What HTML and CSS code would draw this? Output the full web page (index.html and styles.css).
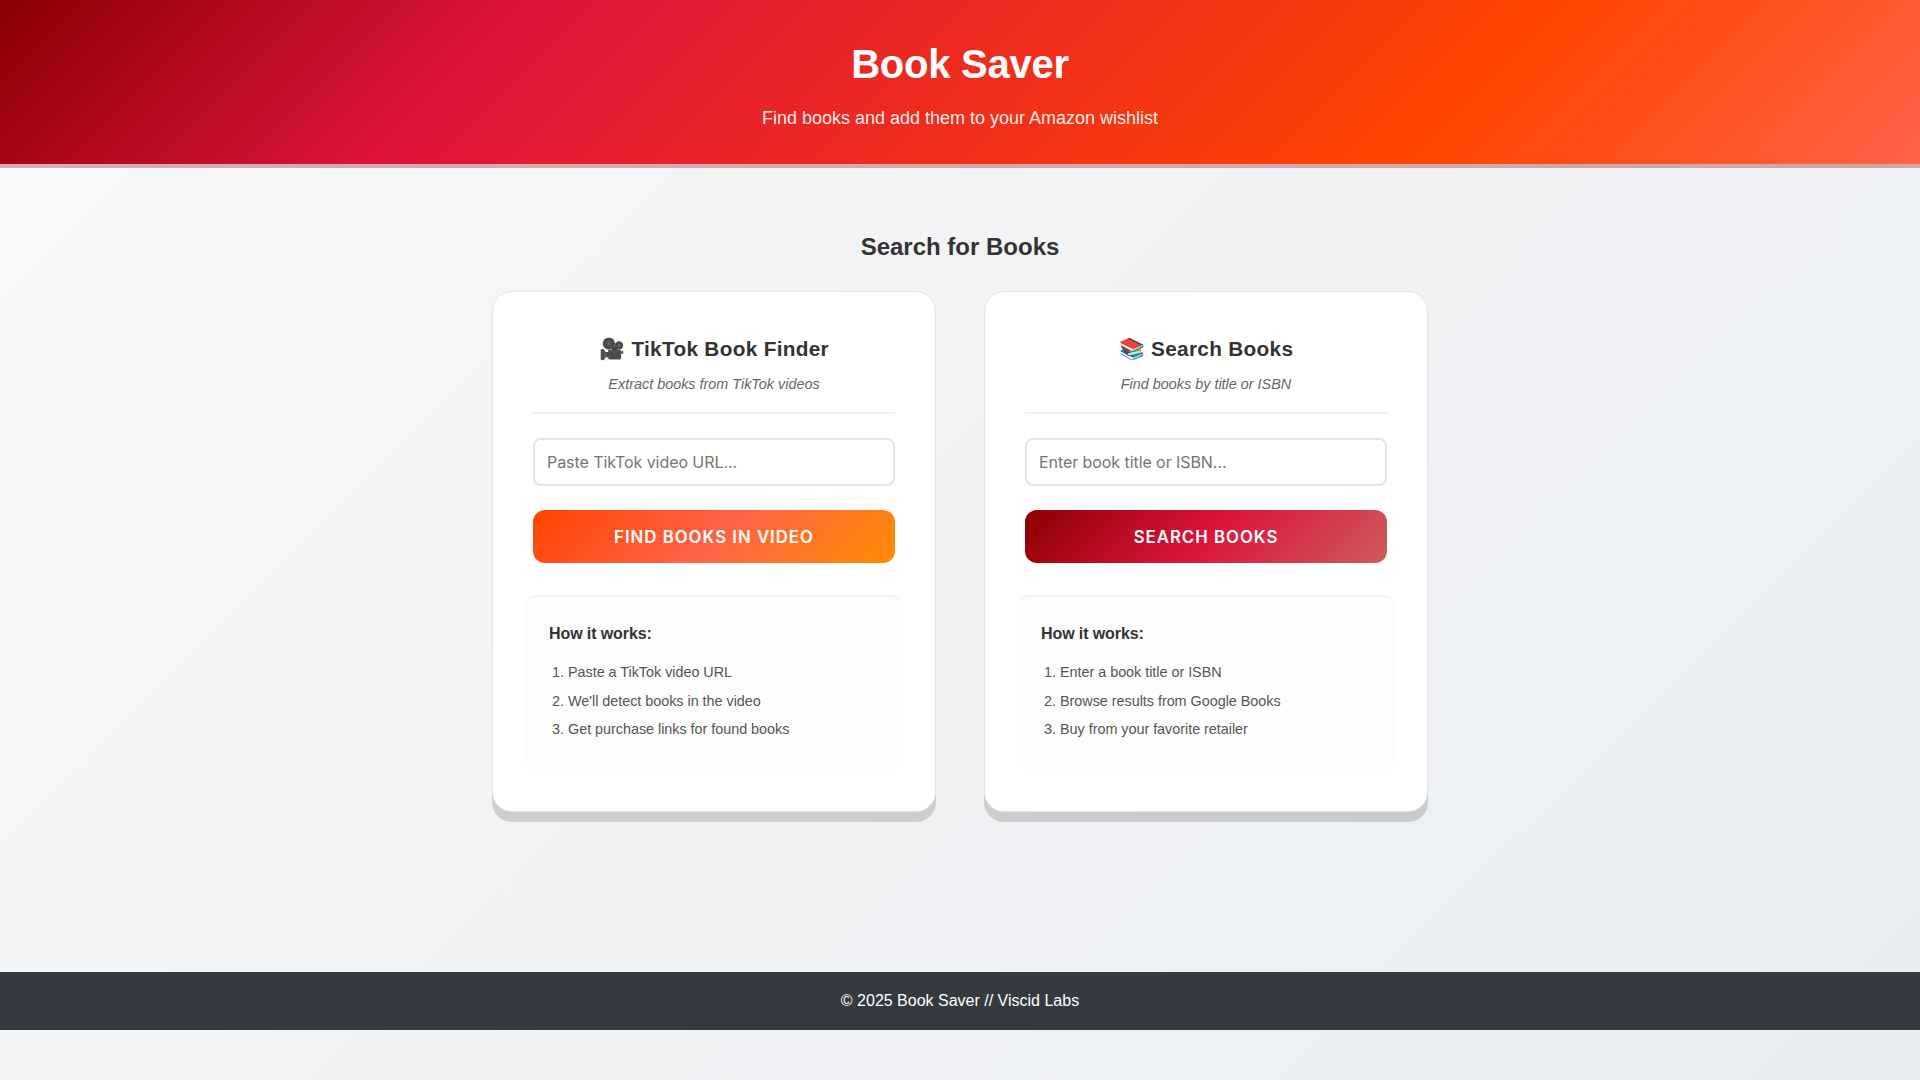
FILE: index.html
```html
<!DOCTYPE html>
<html lang="en">
<head>
<meta charset="utf-8">
<title>Book Saver</title>
<link rel="stylesheet" href="styles.css">
</head>
<body>
<header class="site-header">
  <h1>Book Saver</h1>
  <p>Find books and add them to your Amazon wishlist</p>
</header>
<main class="main">
  <h2 class="section-title">Search for Books</h2>
  <div class="cards">
    <section class="card">
      <div class="card-head">
        <h3>🎥 TikTok Book Finder</h3>
        <p>Extract books from TikTok videos</p>
      </div>
      <input class="field" type="text" placeholder="Paste TikTok video URL...">
      <button class="btn btn-orange" type="button">Find Books in Video</button>
      <div class="how">
        <h4>How it works:</h4>
        <ol>
          <li>Paste a TikTok video URL</li>
          <li>We'll detect books in the video</li>
          <li>Get purchase links for found books</li>
        </ol>
      </div>
    </section>
    <section class="card">
      <div class="card-head">
        <h3>📚 Search Books</h3>
        <p>Find books by title or ISBN</p>
      </div>
      <input class="field" type="text" placeholder="Enter book title or ISBN...">
      <button class="btn btn-red" type="button">Search Books</button>
      <div class="how">
        <h4>How it works:</h4>
        <ol>
          <li>Enter a book title or ISBN</li>
          <li>Browse results from Google Books</li>
          <li>Buy from your favorite retailer</li>
        </ol>
      </div>
    </section>
  </div>
</main>
<footer class="site-footer">© 2025 Book Saver // Viscid Labs</footer>
</body>
</html>
```
FILE: styles.css
```css
* { box-sizing: border-box; }
html { height: 100%; }
body {
  margin: 0;
  min-height: 1080px;
  font-family: "Liberation Sans", Arial, sans-serif;
  color: #333;
  text-rendering: optimizeLegibility;
  background: linear-gradient(135deg, #f8f9fa 0%, #e9ecef 100%);
}
.site-header {
  height: 168px;
  padding-top: 38px;
  text-align: center;
  color: #fff;
  background: linear-gradient(135deg, #8b0000 0%, #dc143c 25%, #ff4500 75%, #ff6347 100%) padding-box;
  border-bottom: 4px solid rgba(139, 0, 0, 0.3);
}
.site-header h1 { margin: 0; font-size: 40px; line-height: 52px; font-weight: 700; letter-spacing: -0.25px; }
.site-header p { margin: 17px 0 0; font-size: 18px; line-height: 22px; opacity: 0.9; }
.main { height: 804px; padding-top: 64px; }
.section-title { margin: 0 0 29px; text-align: center; font-size: 24px; line-height: 30px; font-weight: 700; }
.cards { width: 936px; margin: 0 auto; display: grid; grid-template-columns: 1fr 1fr; gap: 48px; }
.card {
  height: 521px;
  padding: 40px;
  background: #fff;
  border: 1px solid #e2e5e9;
  border-radius: 20px;
  box-shadow: 0 10px 0 rgba(0, 0, 0, 0.15);
}
.card-head { text-align: center; height: 82px; border-bottom: 2px solid #f1f3f5; margin-bottom: 24px; }
.card-head h3 { margin: 0; font-size: 20.8px; line-height: 34px; font-weight: 700; letter-spacing: 0.3px; }
.card-head p { margin: 10px 0 0; font-size: 14.4px; line-height: 17px; font-style: italic; color: #666; }
.field {
  display: block;
  width: 100%;
  height: 48px;
  padding: 0 12px;
  border: 2px solid #e2e6ea;
  border-radius: 8px;
  background: #fff;
  font: 400 16px Inter, sans-serif;
  letter-spacing: -0.07px;
  color: #333;
}
.field::placeholder { color: #757575; opacity: 1; }
.btn {
  display: block;
  width: 100%;
  height: 53px;
  margin-top: 24px;
  border: 0;
  border-radius: 12px;
  color: #fff;
  font: 600 16.8px Inter, sans-serif;
  letter-spacing: 1px;
  text-transform: uppercase;
}
.btn-orange { background: linear-gradient(135deg, #ff4500 0%, #ff6347 50%, #ff8c00 100%); }
.btn-red { background: linear-gradient(135deg, #8b0000 0%, #dc143c 50%, #cd5c5c 100%); }
.how {
  margin: 32px -8px 0;
  height: 175px;
  padding: 28px 24px 24px;
  background: #fdfdfd;
  border-top: 2px solid #f1f3f5;
  border-radius: 12px;
}
.how h4 { margin: 0 0 21px; font-size: 16px; line-height: 18px; font-weight: 700; letter-spacing: -0.1px; }
.how ol { margin: 0; padding-left: 19px; font-size: 14.4px; line-height: 16.5px; color: #555; letter-spacing: -0.03px; }
.how li + li { margin-top: 12px; }
.site-footer {
  height: 58px;
  line-height: 58px;
  text-align: center;
  font-size: 16px;
  color: #fff;
  background: #343a40;
}
```
